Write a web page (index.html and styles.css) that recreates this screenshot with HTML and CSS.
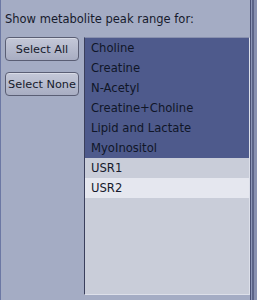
FILE: index.html
```html
<!DOCTYPE html>
<html lang="en">
<head>
    <meta charset="UTF-8">
    <meta name="viewport" content="width=device-width, initial-scale=1.0">
    <title>Metabolite peaks</title>
    <link rel="stylesheet" href="styles.css">
</head>
<body>
<div class="window">
    <div class="main_div">
        <div class="caption">Show metabolite peak range for:</div>
        <div class="content">
            <div class="btn_col">
                <button class="btn">Select All</button>
                <button class="btn">Select None</button>
            </div>
            <div class="list_box">
                <div class="row sel">Choline</div>
                <div class="row sel">Creatine</div>
                <div class="row sel">N-Acetyl</div>
                <div class="row sel">Creatine+Choline</div>
                <div class="row sel">Lipid and Lactate</div>
                <div class="row sel">MyoInositol</div>
                <div class="row">USR1</div>
                <div class="row lead">USR2</div>
            </div>
        </div>
    </div>
    <div class="edge"></div>
</div>
</body>
</html>
```

FILE: styles.css
```css
body{
    margin: 0;
    background-color: #a4acc4;
    font-family: "DejaVu Sans", sans-serif;
    font-size: 11.3px;
    color: #161a2c;
}
.window{
    display: flex;
    width: 257px;
    height: 300px;
}
.main_div{
    flex: 1;
    display: flex;
    flex-direction: column;
    border-left: 1px solid #6c78a4;
    padding: 12px 0 5px 4px;
}
.caption{
    height: 14px;
    line-height: 14px;
    font-size: 11.5px;
    margin-bottom: 11px;
}
.content{
    flex: 1;
    display: flex;
    gap: 5px;
}
.btn_col{
    display: flex;
    flex-direction: column;
    gap: 11px;
}
.btn{
    width: 74px;
    height: 24px;
    padding: 0;
    white-space: nowrap;
    font-family: "DejaVu Sans", sans-serif;
    font-size: 11.3px;
    color: #161a2c;
    border: 1px solid #5a5e74;
    border-radius: 4px;
    background: linear-gradient(#c4c8d8, #a8adc2);
    box-shadow: inset 0 1px 0 #d8dbe6;
}
.list_box{
    flex: 1;
    font-size: 11.6px;
    background-color: #c9cdd9;
    border-left: 1px solid #3a3f5c;
    border-top: 1px solid #8890ae;
    border-right: 1px solid #dde0ea;
    border-bottom: 1px solid #dde0ea;
}
.row{
    height: 20px;
    line-height: 20px;
    padding-left: 6px;
}
.sel{
    background-color: #4e5a8c;
    color: #101628;
}
.lead{
    background-color: #e5e7ef;
}
.edge{
    width: 6px;
    border-left: 1px solid #4a5074;
    background: linear-gradient(90deg, #8c96b8 0 1px, #5c6488 1px 3px, #8890b0 3px);
}
```
